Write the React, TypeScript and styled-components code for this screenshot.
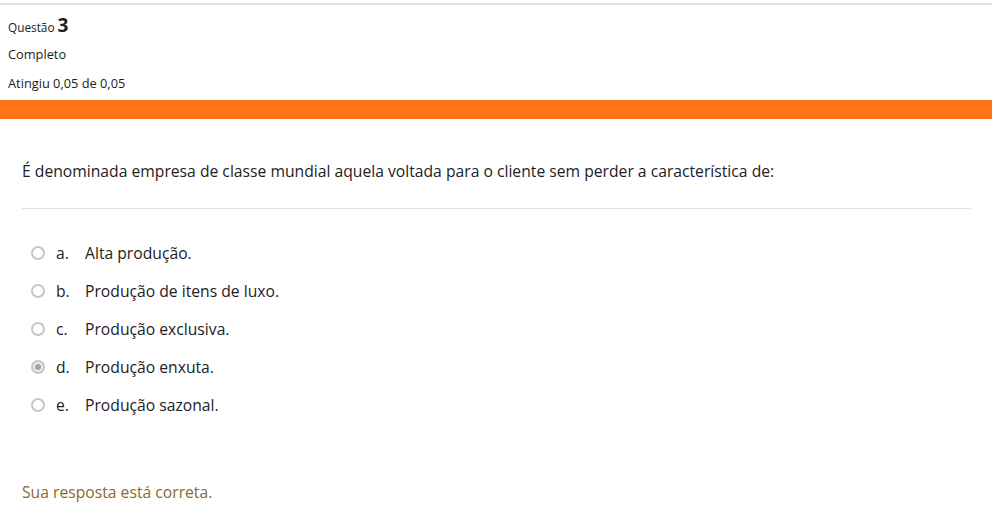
import styled, { createGlobalStyle } from 'styled-components';

const GlobalStyle = createGlobalStyle`
  body {
    margin: 0;
    background: #fff;
    font-family: 'Segoe UI', 'Open Sans', 'Noto Sans', sans-serif;
    color: #1d2125;
  }
`;

const options = [
  { letter: 'a.', text: 'Alta produção.' },
  { letter: 'b.', text: 'Produção de itens de luxo.' },
  { letter: 'c.', text: 'Produção exclusiva.' },
  { letter: 'd.', text: 'Produção enxuta.', checked: true },
  { letter: 'e.', text: 'Produção sazonal.' },
];

export default function App() {
  return (
    <>
      <GlobalStyle />
      <Page>
        <Info>
          <QuestionNo>
            Questão <b>3</b>
          </QuestionNo>
          <InfoLine>Completo</InfoLine>
          <InfoLine>Atingiu 0,05 de 0,05</InfoLine>
        </Info>
        <OrangeBar />
        <Content>
          <QText>
            É denominada empresa de classe mundial aquela voltada para o cliente sem perder a
            característica de:
          </QText>
          <Divider />
          <Answers>
            {options.map((o) => (
              <Answer key={o.letter}>
                <Radio checked={!!o.checked} />
                <Letter>{o.letter}</Letter>
                <span>{o.text}</span>
              </Answer>
            ))}
          </Answers>
          <Feedback>Sua resposta está correta.</Feedback>
        </Content>
      </Page>
    </>
  );
}

const Page = styled.div`
  margin-top: 3px;
  border-top: 2px solid #dee2e6;
`;

const Info = styled.div`
  padding: 10px 8px 0;
  height: 95px;
  box-sizing: border-box;
`;

const QuestionNo = styled.div`
  font-size: 11.8px;
  line-height: 20px;
  b {
    font-size: 19px;
    font-weight: 700;
  }
`;

const InfoLine = styled.div`
  font-size: 12.8px;
  line-height: 15px;
  margin-top: 10px;
  & + & {
    margin-top: 14px;
  }
`;

const OrangeBar = styled.div`
  height: 19px;
  background: #ff7518;
`;

const Content = styled.div`
  padding: 40px 21px 0 22px;
`;

const QText = styled.p`
  margin: 0;
  font-size: 15.7px;
  line-height: 24px;
`;

const Divider = styled.hr`
  border: 0;
  border-top: 1px solid #dee2e6;
  margin: 25px 0 0;
`;

const Answers = styled.div`
  padding-top: 32px;
  display: flex;
  flex-direction: column;
  gap: 14px;
`;

const Answer = styled.div`
  display: flex;
  align-items: center;
  font-size: 15.7px;
  line-height: 24px;
  padding-left: 9px;
`;

const Radio = styled.span<{ checked: boolean }>`
  width: 14px;
  height: 14px;
  box-sizing: border-box;
  border-radius: 50%;
  border: 2px solid #c6c6c6;
  background: ${(p) => (p.checked ? '#ededed' : '#fff')};
  margin-right: 11px;
  position: relative;
  flex-shrink: 0;
  &::after {
    content: '';
    display: ${(p) => (p.checked ? 'block' : 'none')};
    position: absolute;
    left: 2px;
    top: 2px;
    width: 6px;
    height: 6px;
    border-radius: 50%;
    background: #a3a3a3;
  }
`;

const Letter = styled.span`
  width: 29px;
`;

const Feedback = styled.div`
  margin-top: 63px;
  font-size: 15.7px;
  line-height: 24px;
  color: #8e662e;
`;
